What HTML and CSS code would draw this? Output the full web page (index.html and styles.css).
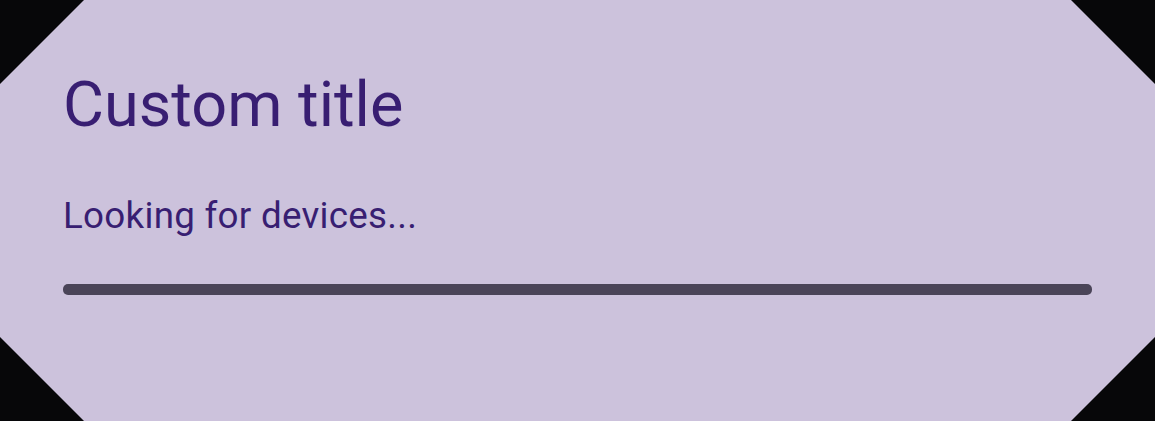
FILE: index.html
```html
<!DOCTYPE html>
<html lang="en">
<head>
<meta charset="utf-8">
<title>Custom title</title>
<link rel="stylesheet" href="styles.css">
</head>
<body>
<div class="dialog">
  <h1 class="title">Custom title</h1>
  <p class="message">Looking for devices...</p>
  <div class="progress"></div>
</div>
</body>
</html>
```
FILE: styles.css
```css
html, body {
  margin: 0;
  padding: 0;
  height: 100%;
}
body {
  background: #070709;
  font-family: Roboto, "Noto Sans", sans-serif;
}
.dialog {
  box-sizing: border-box;
  width: 1155px;
  height: 421px;
  background: #ccc2dc;
  clip-path: polygon(84px 0, calc(100% - 84px) 0, 100% 84px, 100% calc(100% - 84px), calc(100% - 84px) 100%, 84px 100%, 0 calc(100% - 84px), 0 84px);
  padding: 68px 63px 0 63px;
  display: flex;
  flex-direction: column;
}
.title {
  margin: 0;
  font-size: 63px;
  line-height: 74px;
  font-weight: 400;
  color: #381e72;
}
.message {
  margin: 52px 0 0 0;
  font-size: 36.75px;
  line-height: 44px;
  letter-spacing: 0.28px;
  color: #381e72;
}
.progress {
  margin-top: 46px;
  height: 10.5px;
  border-radius: 5px;
  background: #4a4458;
}
```
